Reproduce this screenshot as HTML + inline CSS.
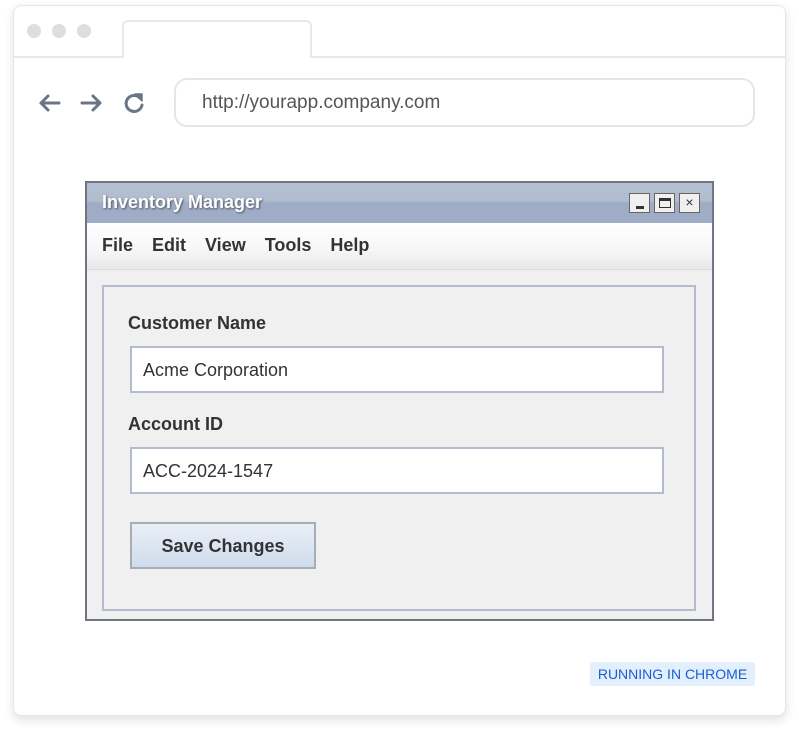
<!DOCTYPE html>
<html><head><style>
*{box-sizing:border-box;margin:0;padding:0}
body{width:799px;height:737px;background:#fff;font-family:"Liberation Sans",Arial,sans-serif;position:relative;overflow:hidden}
.frame{position:absolute;left:13px;top:5px;width:773px;height:711px;border:1px solid #e6e6e6;border-radius:8px;background:#fff;box-shadow:0 4px 10px rgba(0,0,0,.12)}
.tabline{position:absolute;left:13px;top:56px;width:773px;height:2px;background:#e8e8e8}
.dot{position:absolute;top:24px;width:14px;height:14px;border-radius:50%;background:#dedede}
.tab{position:absolute;left:122px;top:20px;width:190px;height:38px;border:2px solid #e8e8e8;border-bottom:none;border-radius:6px 6px 0 0;background:#fff}
.url{position:absolute;left:174px;top:78px;width:581px;height:49px;border:2px solid #e6e6e6;border-radius:13px;font-size:19px;color:#555;padding:12px 0 0 26px}
.win{position:absolute;left:85px;top:181px;width:629px;height:440px;border:2px solid #6f7682;background:#f0f0f0}
.title{height:40px;background:linear-gradient(#b4bfd2,#b1bccf 45%,#9eacc5 50%,#9eacc5);color:#fff;font-weight:bold;font-size:18px;padding:9px 0 0 15px;text-shadow:1px 1px 2px rgba(0,0,0,.5)}
.btns{position:absolute;right:12px;top:10px;display:flex;gap:4px}
.btns div{width:21px;height:20px;border:1px solid #666;background:#f0f0f0;position:relative}
.menu{height:47px;background:linear-gradient(#fff,#f6f6f6 60%,#e8e8e8);border-bottom:1px solid #ddd;font-size:18px;font-weight:bold;color:#333;padding:12px 0 0 15px;word-spacing:14px}
.panel{position:absolute;left:15px;top:102px;width:594px;height:326px;border:2px solid #b3bccf;background:#f0f0f0}
.lbl{position:absolute;left:24px;font-size:18px;font-weight:bold;color:#333}
.inp{position:absolute;left:26px;width:534px;height:47px;border:2px solid #b3bccf;background:#fff;font-size:18px;color:#333;padding:12px 0 0 11px}
.sb{position:absolute;left:26px;top:235px;width:186px;height:47px;border:2px solid #a8adb5;background:linear-gradient(#eaeff7,#cfdced);font-size:18px;font-weight:bold;color:#333;text-align:center;padding-top:12px}
.badge{position:absolute;left:590px;top:662px;width:165px;height:24px;background:#e3effd;border-radius:3px;color:#1a5fd0;font-size:14px;text-align:center;padding-top:4px}
</style></head><body>
<div class="frame"></div>
<div class="tabline"></div>
<div class="dot" style="left:27px"></div><div class="dot" style="left:52px"></div><div class="dot" style="left:77px"></div>
<div class="tab"></div>
<svg style="position:absolute;left:36px;top:90px" width="120" height="26" viewBox="0 0 120 26" fill="none" stroke="#6b7685" stroke-width="3" stroke-linecap="round" stroke-linejoin="round">
<path d="M23 13H5M12 6L5 13L12 20"/>
<path d="M46 13H64M57 6L64 13L57 20"/>
<path d="M104 8A8 8 0 1 0 106 15"/>
<path d="M99 4L106 4L106 11Z" fill="#6b7685" stroke-width="1.5"/>
</svg>
<div class="url">http://yourapp.company.com</div>
<div class="win">
<div class="title">Inventory Manager
<div class="btns"><div><span style="position:absolute;left:6px;top:12px;width:8px;height:3px;background:#333"></span></div><div><span style="position:absolute;left:4px;top:4px;width:12px;height:10px;border:1px solid #333;border-top-width:3px"></span></div><div style="color:#333;font-size:14px;text-align:center;line-height:17px;text-shadow:none;font-weight:normal">×</div></div></div>
<div class="menu">File Edit View Tools Help</div>
<div class="panel">
<div class="lbl" style="top:26px">Customer Name</div>
<div class="inp" style="top:59px">Acme Corporation</div>
<div class="lbl" style="top:127px">Account ID</div>
<div class="inp" style="top:160px">ACC-2024-1547</div>
<div class="sb">Save Changes</div>
</div>
</div>
<div class="badge">RUNNING IN CHROME</div>
</body></html>
